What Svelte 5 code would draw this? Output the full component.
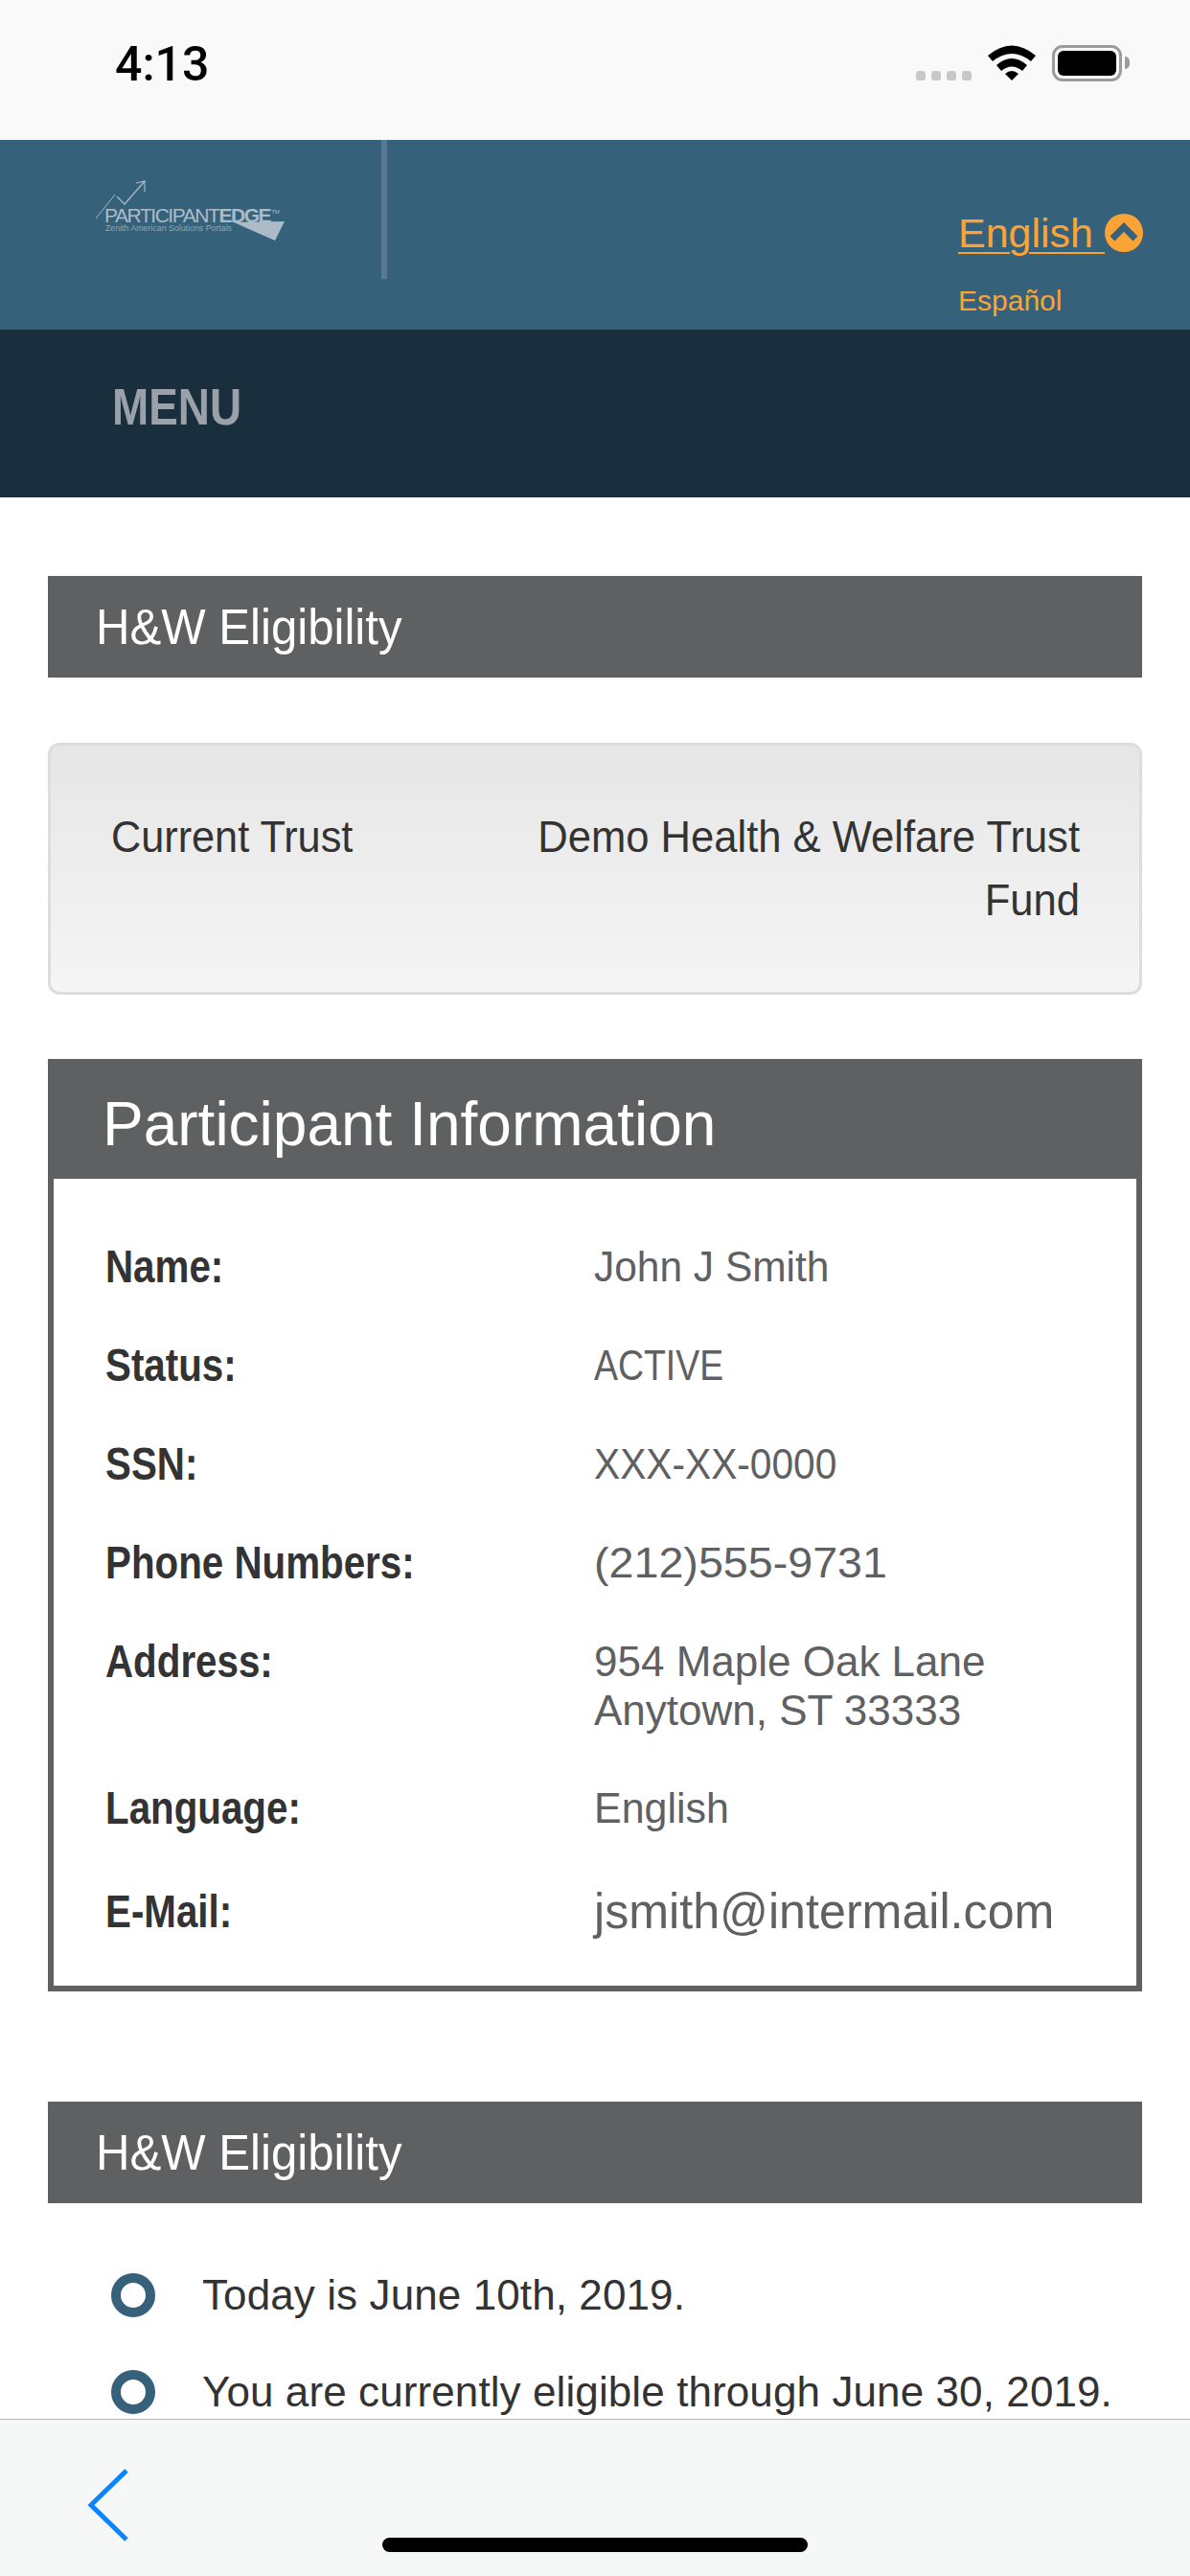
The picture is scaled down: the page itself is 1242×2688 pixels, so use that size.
<script>
  const rows = [
    { label: 'Name:', value: ['John J Smith'], fit: 0.965 },
    { label: 'Status:', value: ['ACTIVE'], fit: 0.85 },
    { label: 'SSN:', value: ['XXX-XX-0000'], fit: 0.925 },
    { label: 'Phone Numbers:', value: ['(212)555-9731'], fit: 1.06 },
    { label: 'Address:', value: ['954 Maple Oak Lane', 'Anytown, ST 33333'], fit: 1 },
    { label: 'Language:', value: ['English'], fit: 0.976 },
    { label: 'E-Mail:', value: ['jsmith@intermail.com'], fit: 0.965, big: true },
  ];
  const notes = ['Today is June 10th, 2019.', 'You are currently eligible through June 30, 2019.'];
</script>

<div class="screen">
  <div class="status">
    <span class="time">4:13</span>
    <div class="status-icons">
      <div class="dots"><i></i><i></i><i></i><i></i></div>
      <svg class="wifi" viewBox="0 0 50 37" width="50" height="37">
        <path d="M0 11 Q25 -10 50 11 L45 17 Q25 1 5 17 Z" fill="#000" />
        <path d="M9 21 Q25 7 41 21 L36 27 Q25 18 14 27 Z" fill="#000" />
        <path d="M18 30 Q25 24 32 30 L25 37 Z" fill="#000" />
      </svg>
      <div class="battery"><div class="level"></div></div>
      <div class="nub"></div>
    </div>
  </div>

  <header class="brand">
    <div class="logo-cell">
      <div class="logo">
        <svg viewBox="0 0 200 80" width="200" height="80">
          <path d="M0 40 L20 15" stroke="#a9bbc8" stroke-width="1" fill="none" />
          <path d="M22 17 L30 25 L51 1" stroke="#a9bbc8" stroke-width="1.2" fill="none" />
          <path d="M42 3 L51 1 L51 12" stroke="#a9bbc8" stroke-width="1.2" fill="none" />
          <path d="M144 44 L197 43 L187 63 Z" fill="#abbcc8" />
        </svg>
        <span class="logo-name">PARTICIPANT<b>EDGE</b><sup>TM</sup></span>
        <span class="logo-sub">Zenith American Solutions Portals</span>
      </div>
    </div>
    <div class="lang">
      <div class="lang-current">
        <span class="lang-link">English&nbsp;</span>
        <svg viewBox="0 0 40 40" width="40" height="40">
          <circle cx="20" cy="20" r="20" fill="#fca335" />
          <path d="M8 26 L20 14 L32 26" stroke="#36617b" stroke-width="7" fill="none" />
        </svg>
      </div>
      <span class="lang-other">Español</span>
    </div>
  </header>

  <nav class="menu"><span>MENU</span></nav>

  <main class="content">
    <h2 class="bar"><span>H&amp;W Eligibility</span></h2>

    <div class="trust">
      <span class="trust-label">Current Trust</span>
      <span class="trust-name">Demo Health &amp; Welfare Trust Fund</span>
    </div>

    <section class="participant">
      <h3>Participant Information</h3>
      <dl>
        {#each rows as row}
          <div class="row" class:big={row.big}>
            <dt>{row.label}</dt>
            <dd>
              {#each row.value as line}
                <div style="transform: scaleX({row.fit})">{line}</div>
              {/each}
            </dd>
          </div>
        {/each}
      </dl>
    </section>

    <h2 class="bar second"><span>H&amp;W Eligibility</span></h2>

    <ul>
      {#each notes as note}
        <li><span class="ring"></span>{note}</li>
      {/each}
    </ul>
  </main>

  <footer class="toolbar">
    <svg class="back" viewBox="0 0 46 78" width="46" height="78">
      <path d="M42 3 L5 39 L42 75" stroke="#0a84ff" stroke-width="5" fill="none" />
    </svg>
    <div class="home"></div>
  </footer>
</div>

<style>
  :global(body) {
    margin: 0;
    background: #fff;
  }

  .screen {
    width: 1242px;
    height: 2688px;
    display: flex;
    flex-direction: column;
    overflow: hidden;
    font-family: 'Liberation Sans', sans-serif;
    color: #333;
  }

  .status {
    height: 146px;
    flex: none;
    background: #f9f9f9;
    display: flex;
    justify-content: space-between;
    padding: 0 63px 0 120px;
    box-sizing: border-box;
  }

  .time {
    font-family: Roboto, sans-serif;
    font-weight: 500;
    font-size: 50px;
    line-height: 134px;
    color: #000;
  }

  .status-icons {
    display: flex;
    align-items: flex-start;
    padding-top: 47px;
  }

  .dots {
    display: flex;
    gap: 6px;
    margin-top: 27px;
    margin-right: 17px;
  }

  .dots i {
    width: 10px;
    height: 10px;
    border-radius: 3px;
    background: #c8c8c8;
  }

  .wifi {
    margin-right: 17px;
  }

  .battery {
    width: 73px;
    height: 38px;
    box-sizing: border-box;
    border: 3px solid #9b9b9b;
    border-radius: 11px;
    padding: 3px;
  }

  .level {
    height: 100%;
    background: #000;
    border-radius: 6px;
  }

  .nub {
    width: 5px;
    height: 13px;
    margin: 12px 0 0 3px;
    background: #9b9b9b;
    border-radius: 0 6px 6px 0;
  }

  .brand {
    height: 198px;
    flex: none;
    background: #36617b;
    display: flex;
    justify-content: space-between;
  }

  .logo-cell {
    width: 404px;
    height: 145px;
    box-sizing: border-box;
    border-right: 6px solid #587b92;
    padding: 42px 0 0 100px;
  }

  .logo {
    position: relative;
    width: 200px;
    height: 80px;
    color: #abbcc8;
  }

  .logo-name {
    position: absolute;
    left: 9px;
    top: 26px;
    font-size: 21px;
    letter-spacing: -1.45px;
    line-height: 22px;
    white-space: nowrap;
  }

  .logo-name sup {
    font-size: 6px;
    letter-spacing: 0;
    vertical-align: 9px;
    line-height: 0;
    margin-left: 1px;
  }

  .logo-sub {
    position: absolute;
    left: 10px;
    top: 44px;
    font-size: 8.8px;
    line-height: 12px;
    white-space: nowrap;
    color: #8fa7b7;
  }

  .lang {
    padding: 72px 47px 0 0;
    color: #fca335;
    width: 195px;
  }

  .lang-current {
    display: flex;
    align-items: center;
    height: 50px;
  }

  .lang-link {
    font-size: 43px;
    text-decoration: underline;
    text-underline-offset: 5px;
    text-decoration-thickness: 2px;
    white-space: nowrap;
  }

  .lang-other {
    display: block;
    margin-top: 29px;
    font-size: 30px;
    line-height: 34px;
  }

  .menu {
    height: 175px;
    flex: none;
    box-sizing: border-box;
    background: #192f3d;
    color: #9aa1a8;
    font-size: 54px;
    font-weight: 700;
    line-height: 160px;
    padding-left: 117px;
  }

  .menu span {
    display: inline-block;
    transform: scaleX(0.85);
    transform-origin: left;
  }

  .content {
    flex: 1;
    min-height: 0;
    overflow: hidden;
    padding: 82px 50px 0;
  }

  .bar {
    margin: 0;
    height: 106px;
    background: #5f6062;
    color: #fff;
    font-weight: 400;
    font-size: 52px;
    line-height: 106px;
    padding-left: 50px;
  }

  .bar span {
    display: inline-block;
    transform: scaleX(0.945);
    transform-origin: left;
  }

  .second {
    margin-top: 115px;
  }

  .trust {
    margin-top: 68px;
    height: 263px;
    box-sizing: border-box;
    display: grid;
    grid-template-columns: 1fr 620px;
    padding: 62px 62px 0 63px;
    border: 3px solid #ddd;
    border-radius: 12px;
    background: linear-gradient(#e6e6e6, #f5f5f5);
    font-size: 46px;
    line-height: 66px;
  }

  .trust-label {
    transform: scaleX(0.94);
    transform-origin: left;
  }

  .trust-name {
    text-align: right;
    transform: scaleX(0.947);
    transform-origin: right;
  }

  .participant {
    margin-top: 67px;
    border: 6px solid #5f6062;
    border-top: none;
  }

  .participant h3 {
    margin: 0 -6px;
    height: 125px;
    box-sizing: border-box;
    background: #5f6062;
    color: #fff;
    font-weight: 400;
    font-size: 64px;
    line-height: 137px;
    padding-left: 57px;
  }

  dl {
    margin: 0;
    padding: 66px 0 0 54px;
    height: 842px;
    box-sizing: border-box;
  }

  .row {
    display: grid;
    grid-template-columns: 510px 1fr;
    margin-bottom: 51px;
    align-items: start;
  }

  .row.big {
    padding-top: 5px;
  }

  .row.big dd {
    font-size: 52px;
  }

  dt {
    font-weight: 700;
    font-size: 48px;
    line-height: 52px;
    color: #333;
    transform: scaleX(0.84);
    transform-origin: left;
    white-space: nowrap;
  }

  dd {
    margin: 0;
    font-size: 44px;
    line-height: 51px;
    color: #5f6062;
    white-space: nowrap;
  }

  dd div {
    transform-origin: left;
  }

  ul {
    list-style: none;
    margin: 0;
    padding: 70px 0 0 66px;
  }

  li {
    display: flex;
    align-items: center;
    font-size: 44px;
    line-height: 52px;
    letter-spacing: 0.1px;
    margin-bottom: 49px;
    white-space: nowrap;
  }

  .ring {
    width: 46px;
    height: 46px;
    box-sizing: border-box;
    border: 10px solid #36617b;
    border-radius: 50%;
    margin-right: 49px;
    flex: none;
  }

  .toolbar {
    height: 164px;
    flex: none;
    box-sizing: border-box;
    border-top: 1px solid #b5b5b5;
    background: #f6f7f7;
    display: flex;
    padding: 50px 0 0 90px;
    position: relative;
  }

  .home {
    position: absolute;
    left: 399px;
    bottom: 25px;
    width: 444px;
    height: 15px;
    border-radius: 8px;
    background: #000;
  }
</style>
